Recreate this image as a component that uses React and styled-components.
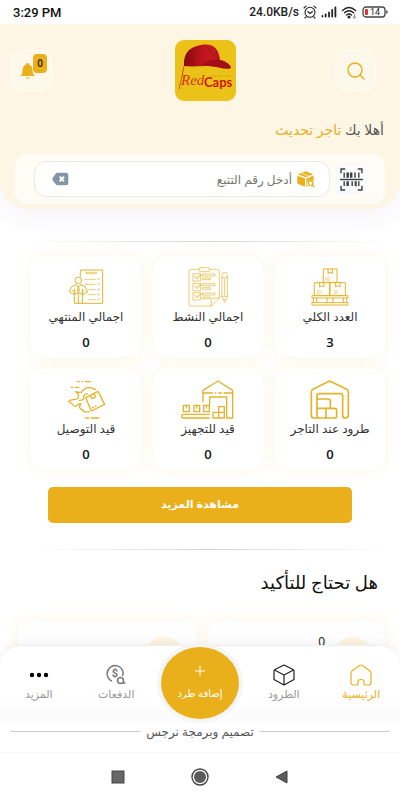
import * as React from 'react'
import styled, { createGlobalStyle } from 'styled-components';

const GOLD = '#e9b01b';

const App = () => {
    return (
        <Shell dir="rtl" lang="ar">
            <GlobalStyle />
            <StatusBar dir="ltr">
                <Clock>3:29 PM</Clock>
                <StatusIcons>
                    <span>24.0KB/s</span>
                    <AlarmIcon />
                    <SignalIcon />
                    <WifiIcon />
                    <BatteryIcon />
                </StatusIcons>
            </StatusBar>

            <Main>
                <Header>
                    <TopRow dir="ltr">
                        <TileButton aria-label="الإشعارات">
                            <BellIcon />
                            <Badge>0</Badge>
                        </TileButton>
                        <Logo />
                        <SearchButton aria-label="بحث">
                            <SearchIcon />
                        </SearchButton>
                    </TopRow>
                    <Welcome>أهلا بك <a href="#profile">تاجر تحديث</a></Welcome>
                    <TrackBar>
                        <ScanButton aria-label="مسح الباركود">
                            <BarcodeIcon />
                        </ScanButton>
                        <TrackField>
                            <TrackIcon />
                            <TrackInput aria-label="رقم التتبع" placeholder="أدخل رقم التتبع" />
                            <ClearButton aria-label="مسح">
                                <ClearIcon />
                            </ClearButton>
                        </TrackField>
                    </TrackBar>
                </Header>

                <Divider $top={32} />
                <StatGrid>
                    {stats.map(({ label, value, Icon }) => (
                        <StatCard key={label} href="#stats">
                            <Icon />
                            <StatLabel>{label}</StatLabel>
                            <StatValue>{value}</StatValue>
                        </StatCard>
                    ))}
                </StatGrid>
                <MoreButton>مشاهدة المزيد</MoreButton>

                <Divider $top={26} />
                <SectionTitle>هل تحتاج للتأكيد</SectionTitle>
                <ConfirmGrid>
                    <ConfirmCard><Dot /><span>0</span></ConfirmCard>
                    <ConfirmCard><Dot /></ConfirmCard>
                </ConfirmGrid>
            </Main>

            <TabBar>
                <Tab href="#home" $active><HomeIcon /><span>الرئيسية</span></Tab>
                <Tab href="#parcels"><BoxIcon /><span>الطرود</span></Tab>
                <AddButton><PlusIcon /><span>إضافة طرد</span></AddButton>
                <Tab href="#payments"><PaymentsIcon /><span>الدفعات</span></Tab>
                <Tab href="#more"><DotsIcon /><span>المزيد</span></Tab>
            </TabBar>
            <Credit>تصميم وبرمجة نرجس</Credit>
            <SystemBar dir="ltr">
                <SystemButton aria-label="Recent apps">
                    <svg width="20" height="20"><rect x="4" y="4" width="12" height="12" fill="#666" stroke="#444" /></svg>
                </SystemButton>
                <SystemButton aria-label="Home">
                    <svg width="20" height="20">
                        <circle cx="10" cy="10" r="8" fill="none" stroke="#444" strokeWidth="1.4" />
                        <circle cx="10" cy="10" r="6" fill="#5c5c5c" />
                    </svg>
                </SystemButton>
                <SystemButton aria-label="Back">
                    <svg width="20" height="20"><path d="M4 10 L15 4 V16 Z" fill="#5c5c5c" stroke="#444" strokeLinejoin="round" /></svg>
                </SystemButton>
            </SystemBar>
        </Shell>
    );
}

export default App

/* status bar icons */

const AlarmIcon = () => (
    <svg width="14" height="14" fill="none" stroke="#222" strokeWidth="1.1" strokeLinecap="round">
        <circle cx="7" cy="7.300" r="5" />
        <path d="M4.800 6.500 L7 8.500 L9.500 6.500 M1 3 L3 1.200 M13 3 L11 1.200 M3 12 L2 13 M11 12 L12 13" />
    </svg>
)

const SignalIcon = () => (
    <svg width="16" height="12" stroke="#222" strokeWidth="1.8" strokeLinecap="round">
        <path d="M1.500 10.500 V10 M4.700 10.500 V8.500 M8 10.500 V6.500 M11.200 10.500 V4 M14.400 10.500 V1.500" />
    </svg>
)

const WifiIcon = () => (
    <svg width="17" height="13" fill="none" stroke="#222" strokeWidth="1.4" strokeLinecap="round">
        <path d="M1.500 4.500 Q8 -1.500 14.500 4.500 M3.500 6.800 Q8 2.800 12.500 6.800 M5.500 9 Q8 6.800 10.500 9" />
        <circle cx="8" cy="11" r=".8" fill="#222" />
        <path d="M13.500 8.500 V12 M12 10.800 L13.500 12 L15 10.800" stroke="#777" strokeWidth=".8" />
    </svg>
)

const BatteryIcon = () => (
    <svg width="26" height="12">
        <rect x="1" y="1" width="22" height="10" rx="3" fill="none" stroke="#444" strokeWidth="1.3" />
        <rect x="3" y="3" width="3" height="6" rx="1" fill="#e0302f" />
        <path d="M24.800 4.500 V7.500" stroke="#444" strokeWidth="1.4" />
        <text x="8" y="9" fontSize="9" fontWeight="400" fontFamily="Roboto, sans-serif" fill="#222">14</text>
    </svg>
)

/* header icons */

const BellIcon = () => (
    <svg width="16" height="18" fill={GOLD}>
        <path d="M7.500 1 C8.500 1 9 1.600 9 2.500 C12 3.500 12.500 6 12.500 8.500 C12.500 11 13.500 12.500 15 14 H0.500 C2 12.500 2.500 11 2.500 8.500 C2.500 6 3.500 3.500 6 2.500 C6 1.600 6.500 1 7.500 1 Z" />
        <path d="M5.500 15.500 H9.800 Q7.600 18 5.500 15.500 Z" />
    </svg>
)

const SearchIcon = () => (
    <svg width="20" height="20" fill="none" stroke={GOLD} strokeWidth="1.4" strokeLinecap="round">
        <circle cx="9" cy="9" r="7" />
        <path d="M14 14 L18 18" />
    </svg>
)

const Logo = () => (
    <svg width="61" height="61" viewBox="0 0 61 61" role="img" aria-label="RedCaps">
        <defs>
            <linearGradient id="cap" x1="0" y1="0" x2="1" y2="0">
                <stop offset="0" stopColor="#860a12" />
                <stop offset=".35" stopColor="#b9131c" />
                <stop offset=".6" stopColor="#c41822" />
                <stop offset="1" stopColor="#9c0c14" />
            </linearGradient>
        </defs>
        <rect width="61" height="61" rx="9" fill="#ebc217" />
        <path d="M9 26 C8 13 15 6 27 5 C38 3 44 9 45 20 C50 21 55 24 56 28 C49 30 42 26 34 26 C25 26 18 27 9 26 Z" fill="url(#cap)" />
        <path d="M26 25 C32 20 39 19 45 20 C50 21 55 24 56 28 C49 30 42 26 34 26 Z" fill="#a50e17" />
        <path d="M27 5 C19 10 17 18 18 26 M27 5 C35 8 38 13 38 19" fill="none" stroke="#97101a" strokeWidth=".6" />
        <path d="M9 26 Q7 38 4 49" fill="none" stroke="#d1370f" strokeWidth=".8" />
        <path d="M36 36 H57" stroke="#d99a12" strokeDasharray="2 1" />
        <text x="6" y="45" fontSize="15" fontStyle="italic" fontFamily="'Liberation Serif', serif" fill="#d1370f">Red</text>
        <text x="29" y="47" fontSize="13" fontWeight="700" fontFamily="Lato, sans-serif" fill="#d0150f">Caps</text>
    </svg>
)

const BarcodeIcon = () => (
    <svg width="23" height="23" viewBox="0 0 66 66" fill="none" stroke="#3c4047" strokeWidth="4">
        <path d="M3 15 V3 H15 M51 3 H63 V15 M63 51 V63 H51 M15 63 H3 V51" />
        <path d="M0 33 H66" />
        <path d="M12 13 V28 M12 38 V52 M43 13 V28 M35 38 V52 M54 13 V28 M54 38 V52" />
        <path d="M22 13 V28 M22 38 V52 M32 13 V28" strokeWidth="7" />
        <path d="M45 38 V52" strokeWidth="6" />
    </svg>
)

const TrackIcon = () => (
    <svg width="18" height="17" viewBox="0 0 54 51">
        <path d="M2 10 L26 1 L49 10 L26 19 Z M1 14 L24 22 V47 L1 38 Z M28 22 L50 14 V30 Q40 24 32 31 Q28 38 32 48 L28 47 Z" fill={GOLD} />
        <path d="M12 6 L36 15 V24" fill="none" stroke="#fff" strokeWidth="2" />
        <circle cx="41" cy="37" r="7" fill="none" stroke={GOLD} strokeWidth="4" />
        <path d="M46 42 L52 49" stroke={GOLD} strokeWidth="4" />
    </svg>
)

const ClearIcon = () => (
    <svg width="17" height="14" viewBox="0 0 51 42">
        <path d="M17 2 H42 Q49 2 49 9 V33 Q49 40 42 40 H17 Q14 40 11 37 L2 25 Q0 21 2 17 L11 5 Q14 2 17 2 Z" fill="#8496a4" />
        <path d="M23 14 L36 28 M36 14 L23 28" stroke="#fff" strokeWidth="6" />
    </svg>
)

/* stat card icons */

const Art = ({ wide = 120, line = 3, children }) => (
    <svg width={wide / 3} height="40" viewBox={`0 0 ${wide} 120`} fill="none" stroke="#e3b32c" strokeWidth={line} strokeLinecap="round" strokeLinejoin="round">
        {children}
    </svg>
)

const PalletIcon = () => (
    <Art>
        <rect x="41" y="6" width="40" height="40" />
        <rect x="14" y="47" width="46" height="39" />
        <rect x="60" y="47" width="46" height="39" />
        <path d="M54 6 V20 L60 15 L67 20 V6 M29 47 V60 L35 56 L42 60 V47 M77 47 V60 L83 56 L90 60 V47" />
        <path d="M47 33 H58 M47 39 H58 M22 72 H32 M22 79 H32 M72 72 H82 M72 79 H82" strokeWidth="2" />
        <rect x="7" y="86" width="107" height="7" />
        <rect x="7" y="107" width="107" height="7" />
        <path d="M10 93 V107 M20 93 V107 M51 93 V107 M69 93 V107 M100 93 V107 M110 93 V107" />
    </Art>
)

const ChecklistIcon = () => (
    <Art wide={126} line={2}>
        <path d="M36 7 H11 Q6 7 6 12 V112 Q6 117 11 117 H73 L97 93 V12 Q97 7 92 7 H68" />
        <path d="M73 117 V98 Q73 93 78 93 H97" />
        <rect x="36" y="2" width="32" height="12" rx="4" />
        {[20, 49, 77].map(y => (
            <g key={y}>
                <rect x="19" y={y} width="22" height="22" />
                <path d={`M24 ${y + 10} L30 ${y + 16} L44 ${y + 3} M24 ${y + 6} L30 ${y + 12} L40 ${y + 2}`} />
                <path d={`M48 ${y + 1} H84 V${y + 7} H48 Z M48 ${y + 13} H70 V${y + 18} H48 Z`} />
            </g>
        ))}
        <path d="M105 22 Q105 16 113 16 Q121 16 121 22 V90 L113 106 L105 90 Z M105 32 H121 M105 88 H121 M113 36 V84 M110 98 H116" />
    </Art>
)

const PersonIcon = () => (
    <Art>
        <path d="M43 28 V9 H110 V109 H49" />
        <path d="M61 16 H92 V20 H61 Z" strokeWidth="2" />
        {[37, 52, 68, 83, 98].map(y => (
            <path key={y} d={`M${y < 60 ? 56 : 68} ${y} H88 M94 ${y - 1} L97 ${y + 2} L102 ${y - 4}`} strokeWidth="2" />
        ))}
        <circle cx="37" cy="40" r="10" />
        <path d="M29 53 L16 60 L10 75 L25 83 M45 53 L58 60 L65 75 L49 83 M29 53 L37 60 L45 53 M25 66 V109 H37 V84 M49 66 V109 H37 M25 80 H49 M37 60 L34 73 L37 78 L40 73 Z M20 71 L25 74 M54 71 L49 74" />
    </Art>
)

const StorageIcon = () => (
    <Art line={5}>
        <path d="M21 88 V50 Q21 44 28 44 H92 Q98 44 98 50 V110 Q98 117 106 117 Q115 117 115 109 V39 Q115 34 110 31 L64 8 Q59 5 54 8 L9 31 Q4 34 4 39 V109 Q4 117 12 117 H73 Q80 117 80 110 V95 Q80 88 73 88 H21 V110 Q21 117 28 117" />
        <path d="M21 60 H54 Q61 60 61 67 V88 M48 88 V117" />
    </Art>
)

const ConveyorIcon = () => (
    <Art wide={168} line={4}>
        <path d="M69 68 V34 L114 6 L158 34 V117 H140 V54 H89 V76" />
        <path d="M69 42 H98 M106 42 H107 M116 42 H124 M132 42 H158" />
        <path d="M99 117 V100 H116 V83 H133 V117 Z M116 117 V100 H133" />
        <path d="M88 106 H10 Q5 106 5 111 Q5 117 10 117 H88" />
        <path d="M10 79 H28 V98 H10 Z M42 79 H59 V98 H42 Z M71 79 H88 V98 H71 Z M19 80 V87 M50 80 V87 M79 80 V87" />
    </Art>
)

const FlameIcon = () => (
    <Art line={4}>
        <path d="M88 32 C74 22 56 24 48 38 C44 42 36 40 29 38 C40 44 40 56 32 60 C24 64 16 58 7 68 C18 66 18 84 30 82 C34 78 38 72 44 74 C38 84 40 90 50 92 C48 98 60 100 70 98" />
        <path d="M64 44 C54 46 51 52 53 59 C50 66 44 62 40 64" />
        <path d="M59 56 L96 37 L116 76 L76 96 Z M73 49 L78 59 L89 54 L84 44 M80 86 L82 85 M88 82 L90 81" />
        <path d="M34 8 H40 M48 8 H50 M58 8 H73 M16 25 H20 M28 25 H39 M58 117 H68 M76 117 H98" />
    </Art>
)

/* tab bar icons */

const HomeIcon = () => (
    <svg width="22" height="22" fill="none" stroke={GOLD} strokeWidth="1.2" strokeLinejoin="round">
        <path d="M7 21 H3.500 Q1 21 1 18.500 V9 Q1 8 2 7 L9.500 1.500 Q11 .5 12.500 1.500 L20 7 Q21 8 21 9 V18.500 Q21 21 18.500 21 H15 Q14 21 14 20 V17.500 Q14 15.500 11 15.500 Q8 15.500 8 17.500 V20 Q8 21 7 21 Z" />
    </svg>
)

const BoxIcon = () => (
    <svg width="22" height="22" fill="none" stroke="#222" strokeWidth="1.2" strokeLinejoin="round">
        <path d="M11 1 L20 5.500 Q21 6 21 7 V15.500 L11 21 L1 15.500 V7 Q1 6 2 5.500 Z M1.500 6 L11 11 L20.500 6 M11 11 V21" />
    </svg>
)

const PlusIcon = () => (
    <svg width="12" height="12" stroke="#fff">
        <path d="M6 1 V11 M1 6 H11" />
    </svg>
)

const PaymentsIcon = () => (
    <svg width="22" height="22" fill="none" stroke="#777" strokeWidth="1.5">
        <path d="M18 8 A8 8 0 1 0 7 17 M17.500 12 Q18.300 10.500 18 8" />
        <text x="10" y="13" fontSize="11" fontWeight="700" textAnchor="middle" fontFamily="Roboto, sans-serif" fill="#777" stroke="none">$</text>
        <circle cx="15.500" cy="16.500" r="3" />
        <path d="M17.500 19 H20.500" />
    </svg>
)

const DotsIcon = () => (
    <svg width="22" height="22" fill="#000">
        <circle cx="4" cy="11" r="2.200" />
        <circle cx="11" cy="11" r="2.200" />
        <circle cx="18" cy="11" r="2.200" />
    </svg>
)

const stats = [
    { label: 'العدد الكلي', value: 3, Icon: PalletIcon },
    { label: 'اجمالي النشط', value: 0, Icon: ChecklistIcon },
    { label: 'اجمالي المنتهي', value: 0, Icon: PersonIcon },
    { label: 'طرود عند التاجر', value: 0, Icon: StorageIcon },
    { label: 'قيد للتجهيز', value: 0, Icon: ConveyorIcon },
    { label: 'قيد التوصيل', value: 0, Icon: FlameIcon },
]

const GlobalStyle = createGlobalStyle`
    * {
        box-sizing: border-box;
    }

    body {
        margin: 0;
        background-color: #fff;
        color: #222;
        font-family: "Noto Sans", "DejaVu Sans", sans-serif;
        font-size: 12px;
    }

    button, input {
        border: 0;
        padding: 0;
        background: none;
        color: inherit;
        font: inherit;
    }

    a {
        color: inherit;
        text-decoration: none;
    }

    svg {
        display: block;
        flex: none;
    }
`

const Shell = styled.div`
    display: flex;
    flex-flow: column;
    height: 100vh;
`

const StatusBar = styled.div`
    display: flex;
    flex: none;
    align-items: center;
    justify-content: space-between;
    height: 24px;
    padding: 0 12px 0 13px;
    font-family: Roboto, sans-serif;
    font-size: 13px;
    font-weight: 500;
`

const Clock = styled.time`
    color: #111;
`

const StatusIcons = styled.div`
    display: flex;
    align-items: center;
    gap: 4px;
    font-size: 12px;
`

const Main = styled.main`
    flex: 1;
    min-height: 0;
    overflow-y: auto;
    scrollbar-width: none;
`

const Header = styled.header`
    padding: 16px 0 5px;
    border-radius: 0 0 28px 28px;
    background-color: #fdf6e4;
    box-shadow: 0 8px 24px rgba(225, 222, 240, 0.35);
`

const TopRow = styled.div`
    display: grid;
    grid-template-columns: 1fr auto 1fr;
    align-items: center;
    padding-left: 11px;
`

const TileButton = styled.button`
    position: relative;
    display: flex;
    align-items: center;
    justify-content: center;
    width: 41px;
    height: 41px;
    padding-right: 8px;
    border: 1px solid #fffdf8;
    border-radius: 12px;
    background-color: #fdf8ea;
`

const SearchButton = styled(TileButton)`
    justify-self: end;
    margin-right: 24px;
    padding-right: 0;
`

const Badge = styled.span`
    position: absolute;
    top: 3px;
    right: 4px;
    width: 14px;
    height: 19px;
    border-radius: 4px;
    background-color: ${GOLD};
    color: #3a2a10;
    font-size: 10px;
    font-weight: 600;
    line-height: 19px;
`

const Welcome = styled.p`
    margin: 17px 16px 12px;
    color: #555;
    font-size: 14px;
    line-height: 24px;

    a {
        color: ${GOLD};
    }
`

const TrackBar = styled.div`
    display: flex;
    align-items: center;
    gap: 5px;
    margin: 0 15px;
    padding: 7px 18px 7px 19px;
    border-radius: 12px;
    background-color: #fefcf5;
`

const ScanButton = styled.button`
    display: flex;
    align-items: center;
    justify-content: center;
    width: 32px;
    height: 32px;
    border-radius: 4px;
    background-color: #fafafa;
`

const TrackField = styled.label`
    display: flex;
    flex: 1;
    align-items: center;
    gap: 5px;
    min-width: 0;
    height: 36px;
    padding: 0 14px 0 17px;
    border: 1px solid #e8e8e8;
    border-radius: 12px;
    background-color: #fff;
`

const TrackInput = styled.input`
    flex: 1;
    min-width: 0;
    outline: 0;
    font-size: 12px;

    &::placeholder {
        color: #777;
        opacity: 1;
    }
`

const ClearButton = styled.button`
    display: flex;
`

const Divider = styled.hr`
    height: 1px;
    margin: ${props => props.$top}px 10px 0 30px;
    border: 0;
    background: linear-gradient(to right, transparent, #d4d4d4 50%, transparent);
`

const StatGrid = styled.section`
    display: grid;
    grid-template-columns: repeat(3, 1fr);
    gap: 12px;
    padding: 15px 15px 18px 31px;
`

const StatCard = styled.a`
    display: flex;
    flex-flow: column;
    align-items: center;
    height: 100px;
    padding-top: 10px;
    border-radius: 12px;
    background-color: #fff;
    box-shadow: 0 0 16px rgba(243, 225, 170, 0.28);
`

const StatLabel = styled.span`
    color: #333;
    font-size: 12px;
    line-height: 20px;
    white-space: nowrap;
`

const StatValue = styled.span`
    margin-top: 5px;
    color: #111;
    font-family: "Open Sans", sans-serif;
    font-size: 13px;
    font-weight: 600;
    line-height: 20px;
`

const MoreButton = styled.button`
    display: block;
    width: calc(100% - 96px);
    height: 36px;
    padding-bottom: 4px;
    margin: 0 auto;
    border-radius: 5px;
    background-color: ${GOLD};
    color: #fff;
    font-size: 11px;
    font-weight: 600;
`

const SectionTitle = styled.h2`
    margin: 20px 22px 27px;
    color: #111;
    font-size: 18px;
    font-weight: 500;
    line-height: 24px;
`

const ConfirmGrid = styled.section`
    display: grid;
    grid-template-columns: repeat(2, 1fr);
    gap: 12px;
    padding: 0 15px 12px 18px;
`

const ConfirmCard = styled.div`
    display: flex;
    align-items: flex-start;
    gap: 8px;
    height: 100px;
    padding: 12px;
    border-radius: 8px;
    background-color: #fefefe;
    box-shadow: 0 0 16px rgba(243, 225, 170, 0.35);
`

const Dot = styled.i`
    width: 40px;
    height: 40px;
    margin-top: 4px;
    border-radius: 50%;
    background-color: #fcf3e0;
`

const TabBar = styled.nav`
    position: relative;
    display: grid;
    flex: none;
    grid-template-columns: 1fr 1fr 90px 1fr 1fr;
    justify-items: center;
    height: 76px;
    margin-top: -20px;
    border-top: 1px solid #eee;
    border-radius: 20px 20px 0 0;
    background: linear-gradient(#fff 70%, #fbfbfb);
    box-shadow: 0 -2px 10px rgba(0, 0, 0, 0.05);
`

const Tab = styled.a`
    display: flex;
    flex-flow: column;
    align-items: center;
    padding-top: 18px;
    color: ${props => props.$active ? GOLD : '#999'};
    font-size: 11px;
    line-height: 16px;
    white-space: nowrap;
`

const AddButton = styled.button`
    display: flex;
    flex-flow: column;
    align-items: center;
    justify-content: center;
    gap: 8px;
    width: 78px;
    height: 72px;
    margin-top: 1px;
    border-radius: 50%;
    background-color: ${GOLD};
    box-shadow: 0 0 0 4px #f5f5f5;
    color: #fff;
    font-size: 10px;
    font-weight: 500;
    line-height: 16px;
    white-space: nowrap;
`

const Credit = styled.footer`
    display: flex;
    flex: none;
    align-items: center;
    gap: 6px;
    height: 31px;
    padding: 0 10px 10px;
    color: #555;
    font-size: 12px;
    line-height: 20px;

    &::before,
    &::after {
        content: '';
        flex: 1;
        height: 1px;
        background-color: #ccc;
    }
`

const SystemBar = styled.div`
    display: flex;
    flex: none;
    align-items: center;
    justify-content: center;
    gap: 62px;
    height: 48px;
    border-top: 1px solid #f5f5f5;
`

const SystemButton = styled.button`
    display: flex;
`
